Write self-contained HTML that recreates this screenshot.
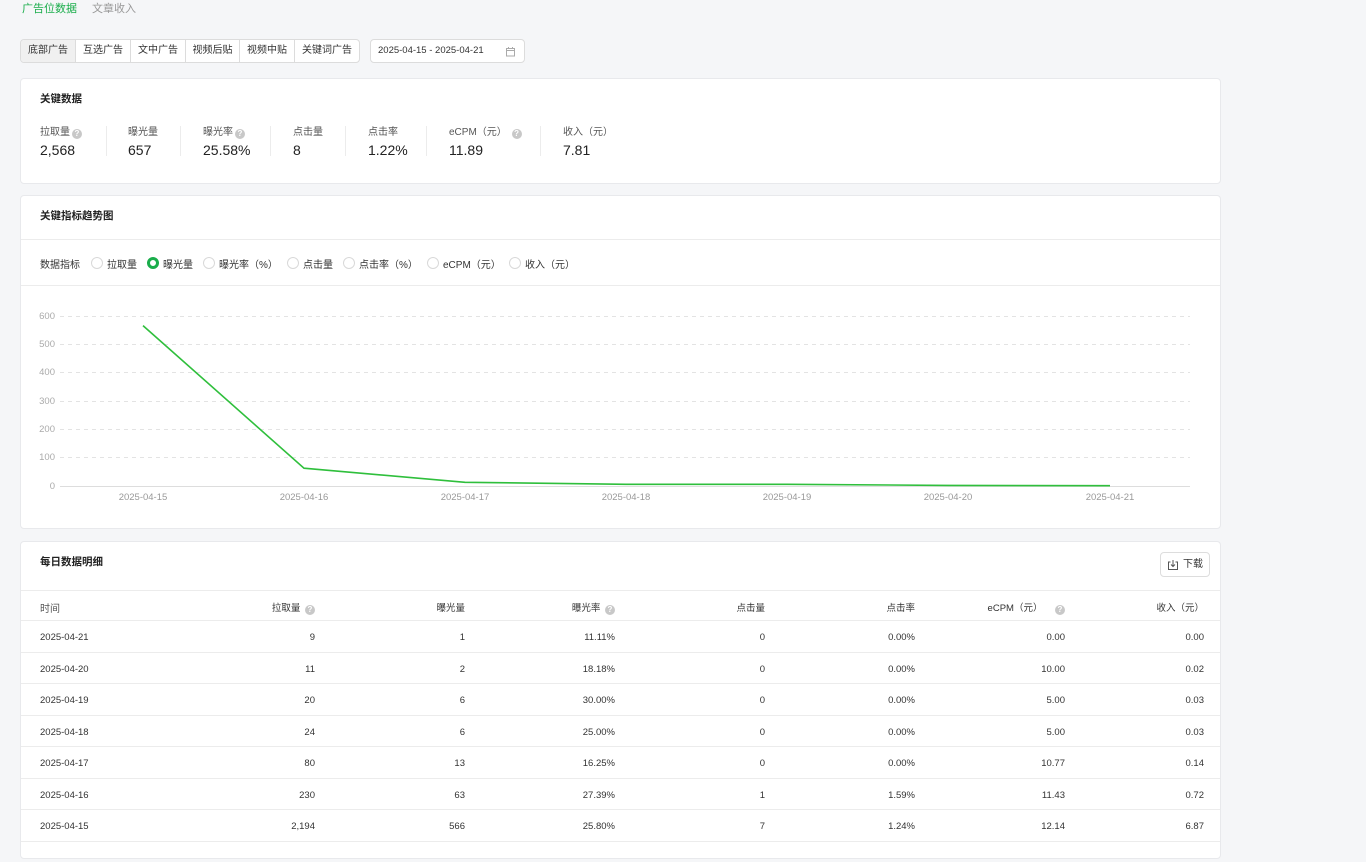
<!DOCTYPE html>
<html><head><meta charset="utf-8"><style>
*{margin:0;padding:0;box-sizing:border-box}
body{width:1366px;height:862px;background:#f5f6f8;font-family:"Liberation Sans","Noto Sans CJK SC",sans-serif;color:#333;position:relative;overflow:hidden;font-size:10px}
.a{position:absolute;white-space:nowrap}
.card{position:absolute;left:20px;width:1201px;background:#fff;border:1px solid #e8e9ec;border-radius:4px}
.t{font-size:10.5px;font-weight:bold;color:#222}
.lab{font-size:10px;color:#555}
.val{font-size:14px;color:#222}
.q{display:inline-block;width:10px;height:10px;border-radius:50%;background:#c8c8c8;color:#fff;font-size:8px;line-height:10px;text-align:center;font-weight:bold;vertical-align:-1px;margin-left:2px}
.vd{position:absolute;top:126px;width:1px;height:30px;background:#ececec}
.r{position:absolute;top:257px;width:12px;height:12px;border:1px solid #d9d9d9;border-radius:50%;background:#fff}
.rl{position:absolute;top:256px;font-size:10px;color:#333;white-space:nowrap}
.hl{position:absolute;left:21px;width:1199px;height:1px;background:#ececec}
.td{position:absolute;font-size:9.5px;color:#333;text-align:right;width:150px}
</style></head><body>
<div class="a" style="left:22px;top:0px;font-size:11px;color:#1aad4b">广告位数据</div>
<div class="a" style="left:92px;top:0px;font-size:11px;color:#999">文章收入</div>
<div class="a" style="left:20px;top:39px;width:340px;height:24px;border:1px solid #dcdcdc;border-radius:4px;background:#fff;display:flex;font-size:10px;overflow:hidden">
<div style="width:55px;background:#f0f0f0;text-align:center;line-height:22px;border-right:1px solid #dcdcdc">底部广告</div>
<div style="width:55px;text-align:center;line-height:22px;border-right:1px solid #dcdcdc">互选广告</div>
<div style="width:55px;text-align:center;line-height:22px;border-right:1px solid #dcdcdc">文中广告</div>
<div style="width:54px;text-align:center;line-height:22px;border-right:1px solid #dcdcdc">视频后贴</div>
<div style="width:55px;text-align:center;line-height:22px;border-right:1px solid #dcdcdc">视频中贴</div>
<div style="flex:1;text-align:center;line-height:22px">关键词广告</div></div>
<div class="a" style="left:370px;top:39px;width:155px;height:24px;border:1px solid #dcdcdc;border-radius:4px;background:#fff;font-size:9.5px;line-height:22px;padding-left:7px">2025-04-15 - 2025-04-21
<svg style="position:absolute;right:8px;top:6px" width="11" height="11" viewBox="0 0 11 11" fill="none" stroke="#aaa"><rect x="1.5" y="2.5" width="8" height="7.5"/><line x1="1.5" y1="4.5" x2="9.5" y2="4.5"/><line x1="3.5" y1="1" x2="3.5" y2="3"/><line x1="7.5" y1="1" x2="7.5" y2="3"/></svg></div>

<div class="card" style="top:78px;height:106px"></div>
<div class="a t" style="left:40px;top:91px">关键数据</div>
<div class="a lab" style="left:40px;top:123px">拉取量<span class="q">?</span></div>
<div class="a lab" style="left:128px;top:123px">曝光量</div>
<div class="a lab" style="left:203px;top:123px">曝光率<span class="q">?</span></div>
<div class="a lab" style="left:293px;top:123px">点击量</div>
<div class="a lab" style="left:368px;top:123px">点击率</div>
<div class="a lab" style="left:449px;top:123px">eCPM（元） <span class="q">?</span></div>
<div class="a lab" style="left:563px;top:123px">收入（元）</div>
<div class="a val" style="left:40px;top:142px">2,568</div>
<div class="a val" style="left:128px;top:142px">657</div>
<div class="a val" style="left:203px;top:142px">25.58%</div>
<div class="a val" style="left:293px;top:142px">8</div>
<div class="a val" style="left:368px;top:142px">1.22%</div>
<div class="a val" style="left:449px;top:142px">11.89</div>
<div class="a val" style="left:563px;top:142px">7.81</div>
<div class="vd" style="left:106px"></div><div class="vd" style="left:180px"></div><div class="vd" style="left:270px"></div><div class="vd" style="left:345px"></div><div class="vd" style="left:426px"></div><div class="vd" style="left:540px"></div>

<div class="card" style="top:195px;height:334px"></div>
<div class="a t" style="left:40px;top:208px">关键指标趋势图</div>
<div class="hl" style="top:239px"></div>
<div class="rl" style="left:40px">数据指标</div>
<span class="r" style="left:91px"></span><div class="rl" style="left:107px">拉取量</div>
<span class="r" style="left:147px;border:3.5px solid #1aad4b"></span><div class="rl" style="left:163px">曝光量</div>
<span class="r" style="left:203px"></span><div class="rl" style="left:219px">曝光率（%）</div>
<span class="r" style="left:287px"></span><div class="rl" style="left:303px">点击量</div>
<span class="r" style="left:343px"></span><div class="rl" style="left:359px">点击率（%）</div>
<span class="r" style="left:427px"></span><div class="rl" style="left:443px">eCPM（元）</div>
<span class="r" style="left:509px"></span><div class="rl" style="left:525px">收入（元）</div>
<div class="hl" style="top:285px"></div>
<svg class="a" style="left:0;top:0" width="1366" height="862">
<g stroke="#e3e3e3" stroke-dasharray="4,4" stroke-width="1">
<line x1="60" y1="316.5" x2="1190" y2="316.5"/><line x1="60" y1="344.5" x2="1190" y2="344.5"/><line x1="60" y1="372.5" x2="1190" y2="372.5"/><line x1="60" y1="401.5" x2="1190" y2="401.5"/><line x1="60" y1="429.5" x2="1190" y2="429.5"/><line x1="60" y1="457.5" x2="1190" y2="457.5"/></g>
<line x1="60" y1="486.5" x2="1190" y2="486.5" stroke="#ddd"/>
<g font-family="Liberation Sans" font-size="9.5" fill="#aaa" text-anchor="end">
<text x="55" y="319">600</text><text x="55" y="347">500</text><text x="55" y="375">400</text><text x="55" y="404">300</text><text x="55" y="432">200</text><text x="55" y="460">100</text><text x="55" y="489">0</text></g>
<g font-family="Liberation Sans" font-size="9.5" fill="#999" text-anchor="middle">
<text x="143" y="500">2025-04-15</text><text x="304" y="500">2025-04-16</text><text x="465" y="500">2025-04-17</text><text x="626" y="500">2025-04-18</text><text x="787" y="500">2025-04-19</text><text x="948" y="500">2025-04-20</text><text x="1110" y="500">2025-04-21</text></g>
<polyline fill="none" stroke="#2fbf3c" stroke-width="1.6" points="143,325.6 304,468.2 465,482.3 626,484.3 787,484.3 948,485.4 1110,485.7"/>
</svg>

<div class="card" style="top:541px;height:318px"></div>
<div class="a t" style="left:40px;top:554px">每日数据明细</div>
<div class="a" style="left:1160px;top:552px;width:50px;height:25px;border:1px solid #ddd;border-radius:4px;font-size:10px;line-height:23px;padding-left:22px">下载
<svg style="position:absolute;left:6px;top:6px" width="12" height="12" viewBox="0 0 12 12" fill="none" stroke="#555"><path d="M3.5 3H1.5V10.5H10.5V3H8.5"/><path d="M6 1V7.5M4 5.5L6 7.5L8 5.5"/></svg></div>
<div class="hl" style="top:590px"></div>
<div class="a lab" style="left:40px;top:600px">时间</div>
<div class="td lab" style="left:165px;top:600px">拉取量 <span class="q">?</span></div>
<div class="td lab" style="left:315px;top:600px">曝光量</div>
<div class="td lab" style="left:465px;top:600px">曝光率 <span class="q">?</span></div>
<div class="td lab" style="left:615px;top:600px">点击量</div>
<div class="td lab" style="left:765px;top:600px">点击率</div>
<div class="td lab" style="left:915px;top:600px">eCPM（元） &nbsp;&nbsp;&nbsp;<span class="q">?</span></div>
<div class="td lab" style="left:1054px;top:600px">收入（元）</div>
<div class="hl" style="top:620px"></div>
<div id="rows"></div>
<script>
var d=[["2025-04-21","9","1","11.11%","0","0.00%","0.00","0.00"],["2025-04-20","11","2","18.18%","0","0.00%","10.00","0.02"],["2025-04-19","20","6","30.00%","0","0.00%","5.00","0.03"],["2025-04-18","24","6","25.00%","0","0.00%","5.00","0.03"],["2025-04-17","80","13","16.25%","0","0.00%","10.77","0.14"],["2025-04-16","230","63","27.39%","1","1.59%","11.43","0.72"],["2025-04-15","2,194","566","25.80%","7","1.24%","12.14","6.87"]];
var L=[165,315,465,615,765,915,1054],h="";
d.forEach(function(r,i){var y=632+i*31.5;h+='<div class="a" style="left:40px;top:'+y+'px;font-size:9.5px">'+r[0]+'</div>';for(var j=1;j<8;j++)h+='<div class="td" style="left:'+L[j-1]+'px;top:'+y+'px">'+r[j]+'</div>';h+='<div class="hl" style="top:'+(651.5+i*31.5)+'px"></div>';});
document.getElementById("rows").innerHTML=h;
</script>
</body></html>
